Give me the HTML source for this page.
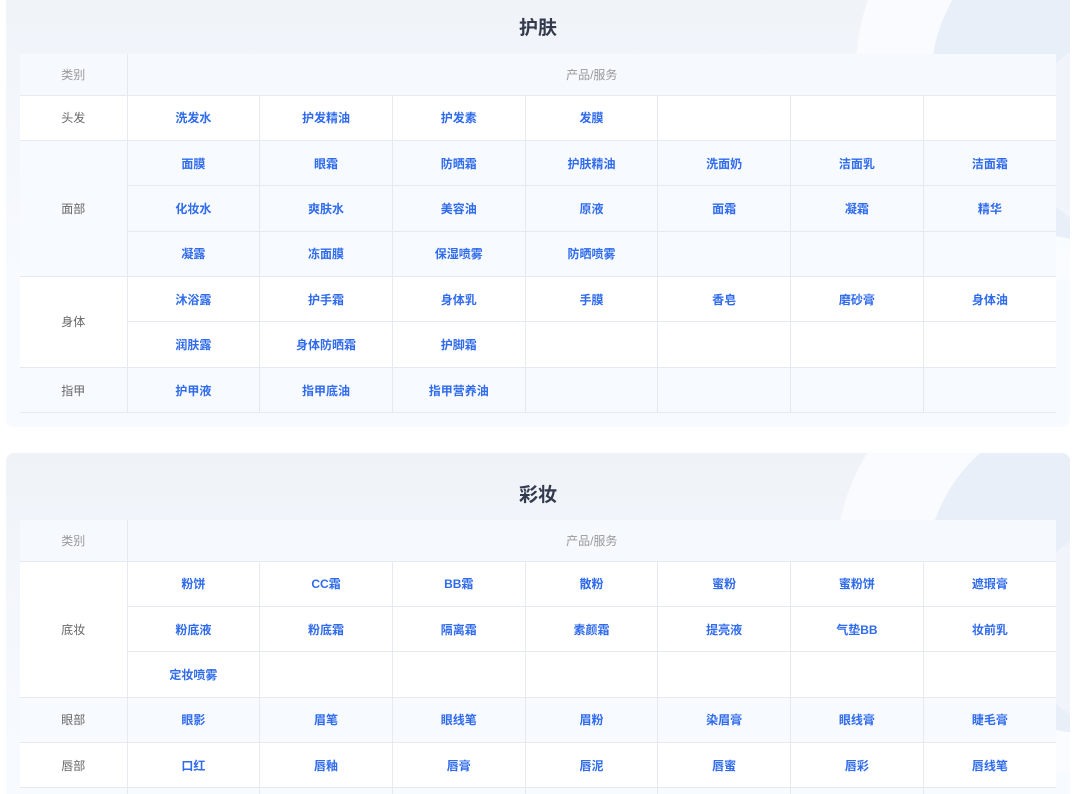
<!DOCTYPE html>
<html><head><meta charset="utf-8"><style>
*{margin:0;padding:0;box-sizing:border-box}
html,body{width:1080px;height:794px;overflow:hidden}
body{background:#fff;font-family:"Liberation Sans","Noto Sans CJK SC",sans-serif;position:relative}
.card{position:absolute;left:6px;width:1064px;border-radius:8px;overflow:hidden;background:linear-gradient(180deg,#eff3f8 0px,#f3f6fb 120px,#f7faff 300px)}
.c1{top:-20px;height:447px}
.c2{top:453px;height:341px;border-radius:8px 8px 0 0}
.circ{position:absolute;border-radius:50%}
.title{position:absolute;left:0;width:100%;text-align:center;font-size:19px;font-weight:bold;color:#333a4d}
table{position:absolute;left:14px;border-collapse:collapse;table-layout:fixed;width:1036px}
td{height:45.4px;text-align:center;font-size:12px;border:1px solid #e6eaf0;color:#2f6bec;font-weight:bold;padding:0}
td.cat{color:#666;font-weight:normal;width:107px}
tr.h td{height:41px;color:#999;font-weight:normal;background:#f6f9fd;border-top:none}
tr.w td{background:#fff}
tr.l td{background:#f7faff}
tr td:first-child{border-left:none}
tr td:last-child{border-right:none}
</style></head><body>
<div class="card c1">
<div class="circ" style="left:850px;top:-120px;width:420px;height:420px;background:#fafcff;opacity:.9"></div>
<div class="circ" style="left:925px;top:-60px;width:320px;height:320px;background:#e9eff8"></div>
<div class="circ" style="left:1020px;top:55px;width:200px;height:200px;background:#f1f5fb"></div>
<div class="title" style="top:33px">护肤</div>
<table style="top:74px">
<colgroup><col style="width:107px"><col><col><col><col><col><col><col></colgroup>
<tr class="h"><td class="cat">类别</td><td colspan="7">产品/服务</td></tr>
<tr class="w"><td class="cat">头发</td><td>洗发水</td><td>护发精油</td><td>护发素</td><td>发膜</td><td></td><td></td><td></td></tr>
<tr class="l"><td class="cat" rowspan="3">面部</td><td>面膜</td><td>眼霜</td><td>防晒霜</td><td>护肤精油</td><td>洗面奶</td><td>洁面乳</td><td>洁面霜</td></tr>
<tr class="l"><td>化妆水</td><td>爽肤水</td><td>美容油</td><td>原液</td><td>面霜</td><td>凝霜</td><td>精华</td></tr>
<tr class="l"><td>凝露</td><td>冻面膜</td><td>保湿喷雾</td><td>防晒喷雾</td><td></td><td></td><td></td></tr>
<tr class="w"><td class="cat" rowspan="2">身体</td><td>沐浴露</td><td>护手霜</td><td>身体乳</td><td>手膜</td><td>香皂</td><td>磨砂膏</td><td>身体油</td></tr>
<tr class="w"><td>润肤露</td><td>身体防晒霜</td><td>护脚霜</td><td></td><td></td><td></td><td></td></tr>
<tr class="l"><td class="cat">指甲</td><td>护甲液</td><td>指甲底油</td><td>指甲营养油</td><td></td><td></td><td></td><td></td></tr>
</table>
</div>
<div class="card c2">
<div class="circ" style="left:830px;top:-100px;width:420px;height:420px;background:#fafcff;opacity:.9"></div>
<div class="circ" style="left:920px;top:-40px;width:320px;height:320px;background:#e9eff8"></div>
<div class="circ" style="left:1015px;top:75px;width:200px;height:200px;background:#f1f5fb"></div>
<div class="title" style="top:27px">彩妆</div>
<table style="top:67px">
<colgroup><col style="width:107px"><col><col><col><col><col><col><col></colgroup>
<tr class="h"><td class="cat">类别</td><td colspan="7">产品/服务</td></tr>
<tr class="w"><td class="cat" rowspan="3">底妆</td><td>粉饼</td><td>CC霜</td><td>BB霜</td><td>散粉</td><td>蜜粉</td><td>蜜粉饼</td><td>遮瑕膏</td></tr>
<tr class="w"><td>粉底液</td><td>粉底霜</td><td>隔离霜</td><td>素颜霜</td><td>提亮液</td><td>气垫BB</td><td>妆前乳</td></tr>
<tr class="w"><td>定妆喷雾</td><td></td><td></td><td></td><td></td><td></td><td></td></tr>
<tr class="l"><td class="cat">眼部</td><td>眼影</td><td>眉笔</td><td>眼线笔</td><td>眉粉</td><td>染眉膏</td><td>眼线膏</td><td>睫毛膏</td></tr>
<tr class="w"><td class="cat">唇部</td><td>口红</td><td>唇釉</td><td>唇膏</td><td>唇泥</td><td>唇蜜</td><td>唇彩</td><td>唇线笔</td></tr>
<tr class="l"><td class="cat"></td><td></td><td></td><td></td><td></td><td></td><td></td><td></td></tr>
</table>
</div>
</body></html>
